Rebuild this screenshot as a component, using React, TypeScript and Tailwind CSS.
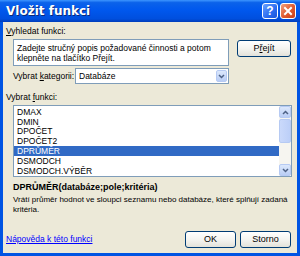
import React from "react";

const font = { fontFamily: '"Liberation Sans", Arial, sans-serif' };

function XPButton({ children, className = "" }: { children: React.ReactNode; className?: string }) {
  return (
    <div
      className={
        "flex items-center justify-center rounded-[3px] border border-[#003c74] bg-[linear-gradient(180deg,#ffffff_0%,#f4f4f0_50%,#e3e2da_100%)] text-[9px] text-black " +
        className
      }
    >
      {children}
    </div>
  );
}

const items = ["DMAX", "DMIN", "DPOČET", "DPOČET2", "DPRŮMĚR", "DSMODCH", "DSMODCH.VÝBĚR"];

export default function App() {
  return (
    <div
      className="flex h-[256px] w-[300px] flex-col overflow-hidden bg-[#0054e3] text-[8.5px] leading-none text-black"
      style={font}
    >
      {/* Title bar */}
      <div className="flex h-[22px] shrink-0 items-center bg-[linear-gradient(180deg,#3d95ff_0%,#0b62ea_12%,#0058ee_45%,#004fde_85%,#003dbb_100%)] pl-[6px] pr-[4px]">
        <span
          className="flex-1 text-[12px] font-bold text-white [text-shadow:1px_1px_0_#0a2a7a]"
          style={{ fontFamily: '"DejaVu Sans", Verdana, sans-serif' }}
        >
          Vložit funkci
        </span>
        <div className="flex h-[16px] w-[16px] items-center justify-center rounded-[3px] border border-white bg-[linear-gradient(135deg,#6aa0ff_0%,#2a6cf0_60%,#1c55d8_100%)] text-[12px] font-bold leading-none text-white">
          ?
        </div>
        <div className="ml-[2px] flex h-[16px] w-[16px] items-center justify-center rounded-[3px] border border-white bg-[linear-gradient(135deg,#f0a080_0%,#e0592d_55%,#c8401a_100%)]">
          <svg width="10" height="10" viewBox="0 0 10 10">
            <path d="M2 2 L8 8 M8 2 L2 8" stroke="white" strokeWidth="2" strokeLinecap="square" />
          </svg>
        </div>
      </div>

      {/* Body */}
      <div className="mx-[3px] mb-[3px] flex flex-1 flex-col bg-[#ece9d8] pl-[3px] pr-[3px]">
        <div className="mt-[5px] h-[10px] pl-[0px]">
          <span className="underline decoration-1">V</span>yhledat funkci:
        </div>
        <div className="mt-[2px] flex items-start pl-[7px]">
          <div className="h-[27px] w-[216px] whitespace-nowrap border border-[#7f9db9] bg-white px-[3px] pt-[3px] leading-[10px]">
            Zadejte stručný popis požadované činnosti a potom
            <br />
            klepněte na tlačítko Přejít.
          </div>
          <XPButton className="ml-[8px] mt-[1px] h-[17px] w-[54px]">
            <span>
              P<span className="underline">ř</span>ejít
            </span>
          </XPButton>
        </div>
        <div className="mt-[2px] flex items-center pl-[7px]">
          <span className="w-[62px]">
            Vybrat <span className="underline">k</span>ategorii:
          </span>
          <div className="flex h-[16px] w-[154px] items-center border border-[#7f9db9] bg-white pl-[3px]">
            <span className="flex-1">Databáze</span>
            <div className="mr-[1px] flex h-[12px] w-[11px] items-center justify-center rounded-[2px] bg-[linear-gradient(180deg,#dce8fc_0%,#b9cdf5_100%)] border border-[#b6caf3]">
              <svg width="7" height="5" viewBox="0 0 7 5">
                <path d="M1 1 L3.5 3.5 L6 1" stroke="#4d6185" strokeWidth="1.5" fill="none" />
              </svg>
            </div>
          </div>
        </div>
        <div className="mt-[9px] h-[10px]">
          Vybrat <span className="underline">f</span>unkci:
        </div>
        <div className="ml-[7px] mt-[2px] flex h-[72px] w-[279px] border border-[#7f9db9] bg-white">
          <div className="flex flex-1 flex-col pt-[1px]">
            {items.map((it) => (
              <div
                key={it}
                className={
                  "flex h-[10.5px] items-center pl-[3px] " +
                  (it === "DPRŮMĚR" ? "bg-[#316ac5] text-white" : "")
                }
              >
                {it}
              </div>
            ))}
          </div>
          <div className="flex w-[12px] flex-col bg-[#f6f5f0]">
            <div className="flex h-[12px] items-center justify-center rounded-[2px] border border-[#b6caf3] bg-[linear-gradient(180deg,#dce8fc_0%,#b9cdf5_100%)]">
              <svg width="7" height="5" viewBox="0 0 7 5">
                <path d="M1 4 L3.5 1.5 L6 4" stroke="#4d6185" strokeWidth="1.5" fill="none" />
              </svg>
            </div>
            <div className="mt-[1px] h-[24px] rounded-[2px] border border-[#b6caf3] bg-[linear-gradient(90deg,#cad9fb_0%,#bccff8_100%)]" />
            <div className="flex-1" />
            <div className="flex h-[12px] items-center justify-center rounded-[2px] border border-[#b6caf3] bg-[linear-gradient(180deg,#dce8fc_0%,#b9cdf5_100%)]">
              <svg width="7" height="5" viewBox="0 0 7 5">
                <path d="M1 1 L3.5 3.5 L6 1" stroke="#4d6185" strokeWidth="1.5" fill="none" />
              </svg>
            </div>
          </div>
        </div>
        <div className="ml-[7px] mt-[6px] text-[9px] font-bold">DPRŮMĚR(databáze;pole;kritéria)</div>
        <div className="ml-[7px] mt-[3px] whitespace-nowrap text-[8px] leading-[10px]">
          Vrátí průměr hodnot ve sloupci seznamu nebo databáze, které splňují zadaná
          <br />
          kritéria.
        </div>
        <div className="mt-auto mb-[5px] flex items-center">
          <span className="flex-1 text-[#0000ff] underline">Nápověda k této funkci</span>
          <XPButton className="h-[17px] w-[51px]">OK</XPButton>
          <XPButton className="ml-[4px] mr-[3px] h-[17px] w-[51px]">Storno</XPButton>
        </div>
      </div>
    </div>
  );
}
